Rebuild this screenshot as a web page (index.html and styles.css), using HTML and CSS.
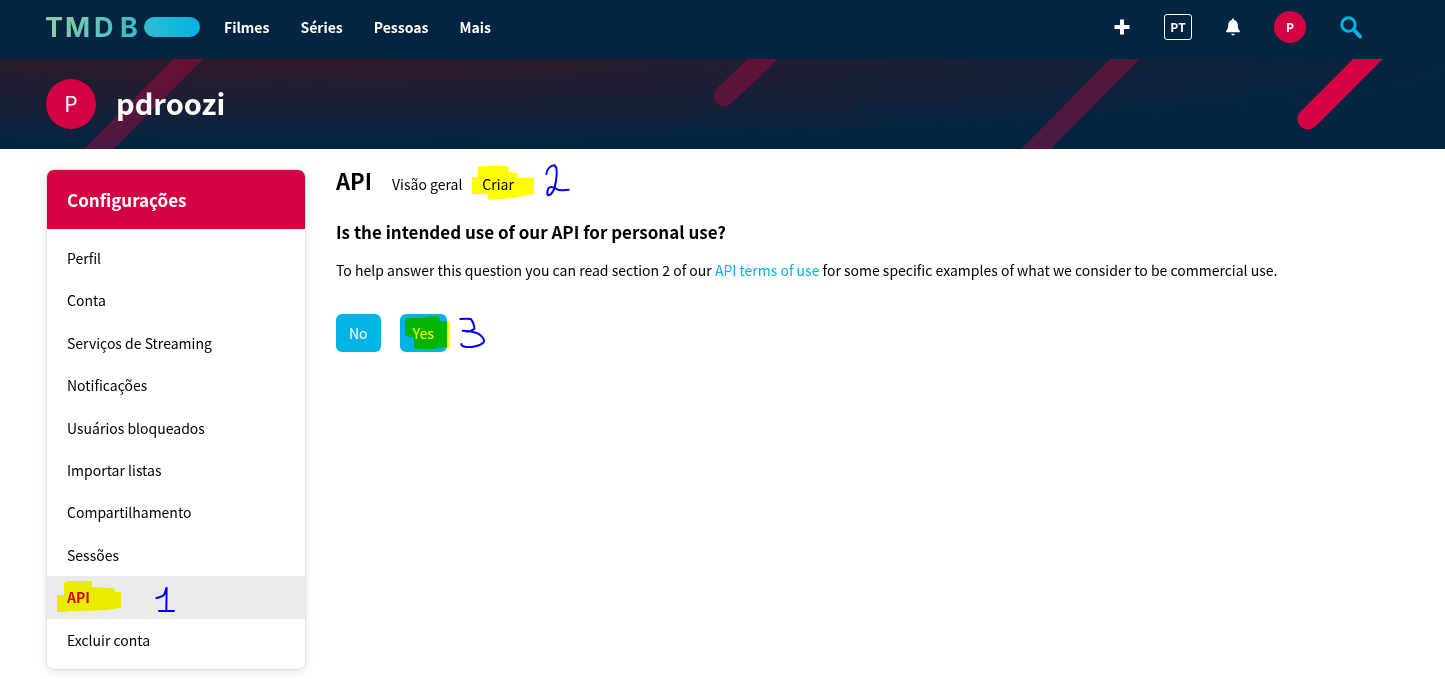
FILE: index.html
```html
<!DOCTYPE html>
<html lang="pt-BR">
<head>
<meta charset="utf-8">
<title>API — TMDB</title>
<link rel="stylesheet" href="styles.css">
</head>
<body>
<header class="topbar">
  <a class="logo" href="#" aria-label="TMDB">
    <svg width="155" height="40" viewBox="0 0 155 40">
      <defs>
        <linearGradient id="brand" gradientUnits="userSpaceOnUse" x1="0" y1="0" x2="155" y2="0">
          <stop offset="0" stop-color="#90cea1"/>
          <stop offset="0.56" stop-color="#3cbec9"/>
          <stop offset="1" stop-color="#00b3e5"/>
        </linearGradient>
      </defs>
      <text class="logo-text" x="-1 19 48 74" y="30" fill="url(#brand)">TMDB</text>
      <rect x="98" y="10" width="56" height="20" rx="10" fill="url(#brand)"/>
    </svg>
  </a>
  <nav class="nav">
    <a href="#">Filmes</a>
    <a href="#">Séries</a>
    <a href="#">Pessoas</a>
    <a href="#">Mais</a>
  </nav>
  <div class="tools">
    <button class="tool" type="button" aria-label="Adicionar">
      <svg width="16" height="16" viewBox="0 0 16 16"><path d="M6 0.500h4V6h5.500v4H10v5.500H6V10H0.500V6H6z" fill="#fff"/></svg>
    </button>
    <button class="lang" type="button">PT</button>
    <button class="tool" type="button" aria-label="Notificações">
      <svg width="14" height="18" viewBox="0 0 14 18"><path d="M7 0.500c.6 0 1 .4 1 1v.4c2.300.5 3.800 2.400 3.800 4.900 0 3.300.6 4.500 1.900 6 .5.600.1 1.500-.7 1.500H1c-.8 0-1.200-.9-.7-1.500 1.300-1.500 1.900-2.700 1.900-6 0-2.500 1.500-4.400 3.800-4.900v-.4c0-.6.4-1 1-1zM5.300 15.700h3.400c0 1-.7 1.700-1.700 1.700s-1.700-.7-1.700-1.700z" fill="#fff"/></svg>
    </button>
    <a class="avatar avatar-small" href="#">P</a>
    <button class="tool" type="button" aria-label="Buscar">
      <svg width="22" height="23" viewBox="0 0 22 23"><g fill="none" stroke="#01b4e4"><circle cx="8.500" cy="8.500" r="6.700" stroke-width="3"/><path d="M14 14l6 6.500" stroke-width="4" stroke-linecap="round"/></g></svg>
    </button>
  </div>
</header>

<section class="banner">
  <svg class="stripes" aria-hidden="true">
    <g fill="none" stroke="#d40242" stroke-width="21" stroke-linecap="round">
      <path d="M218-30L69 120M804-39L724 37M1155-30L1006 120" opacity="0.35"/>
      <path d="M1398-30L1308 60"/>
    </g>
  </svg>
  <a class="avatar avatar-large" href="#">P</a>
  <h1 class="username">pdroozi</h1>
</section>

<div class="page">
  <aside class="card">
    <h2 class="card-title">Configurações</h2>
    <ul class="menu">
      <li><a href="#">Perfil</a></li>
      <li><a href="#">Conta</a></li>
      <li><a href="#">Serviços de Streaming</a></li>
      <li><a href="#">Notificações</a></li>
      <li><a href="#">Usuários bloqueados</a></li>
      <li><a href="#">Importar listas</a></li>
      <li><a href="#">Compartilhamento</a></li>
      <li><a href="#">Sessões</a></li>
      <li class="current">
        <a href="#">API</a>
        <svg class="marker marker-api" width="64" height="31" viewBox="63 63 192 93" aria-hidden="true"><path d="M63 105H84V68L94 63H167V81L215 83L234 85L238 96H255V143L240 146L212 150L165 152L93 153V156H63z"/></svg>
        <svg class="pen pen-one" width="20" height="27" viewBox="357 78 60 81" aria-hidden="true"><path d="M361 114C370 112 380 110 385 103C387 97 390 88 392 82L391 152M369 153H414"/></svg>
      </li>
      <li><a href="#">Excluir conta</a></li>
    </ul>
  </aside>

  <main class="content">
    <div class="tabs">
      <h2 class="title">API</h2>
      <a href="#">Visão geral</a>
      <span class="marked">
        <a href="#">Criar</a>
        <svg class="marker marker-create" width="62" height="34" viewBox="456 33 186 102" aria-hidden="true"><path d="M456 67H474V35L500 33H560L566 38V50L592 54V68H642V117L620 120L590 127L545 132L520 135L504 133V117H456z"/></svg>
        <svg class="pen pen-two" width="27" height="34" viewBox="672 21 81 102" aria-hidden="true"><path d="M679 54C681 38 692 28 704 28C711 33 711 55 708 75C705 95 698 115 686 118C679 117 682 105 685 97C692 89 702 93 712 100C722 106 735 101 746 101"/></svg>
      </span>
    </div>
    <h3 class="question">Is the intended use of our API for personal use?</h3>
    <p class="help">To help answer this question you can read section 2 of our <a href="#">API terms of use</a> for some specific examples of what we consider to be commercial use.</p>
    <div class="actions">
      <button class="btn" type="button">No</button>
      <span class="marked">
        <button class="btn" type="button">Yes</button>
        <svg class="marker marker-yes" width="45" height="33" viewBox="255 198 135 99" aria-hidden="true"><path d="M255 204L300 203L330 199H350L360 204V213H389V293H348V297H295L282 293V262L268 260L255 256z"/></svg>
        <svg class="pen pen-three" width="27" height="31" viewBox="417 202 81 93" aria-hidden="true"><path d="M421 208C432 207 445 207 452 208C458 215 463 225 463 238L452 244C442 246 432 245 426 243C442 243 462 246 475 252C490 262 495 272 490 279C478 290 450 294 435 291C428 290 424 287 424 283"/></svg>
      </span>
    </div>
  </main>
</div>
</body>
</html>
```
FILE: styles.css
```css
* { box-sizing: border-box; }

body {
  margin: 0;
  background: #fff;
  color: #000;
  font-family: "Noto Sans CJK SC", "Noto Sans", sans-serif;
  font-size: 14px;
  line-height: 1.6;
}

h1, h2, h3, p, ul { margin: 0; padding: 0; }
ul { list-style: none; }
a { color: inherit; text-decoration: none; }
svg { display: block; }
button { font-family: inherit; cursor: pointer; }

.topbar {
  display: flex;
  align-items: center;
  padding: 7px 83px 12px 46px;
  background: #032541;
  color: #fff;
}

.logo-text {
  font-family: Inter, sans-serif;
  font-size: 27px;
  font-weight: 700;
}

.nav {
  display: flex;
  gap: 31px;
  margin-left: 23px;
  font-weight: 700;
}

.tools {
  display: flex;
  align-items: center;
  gap: 34px;
  margin-left: auto;
}

.tool {
  padding: 0;
  border: 0;
  background: none;
}

.lang {
  width: 28px;
  height: 26px;
  padding: 0;
  border: 1px solid #fff;
  border-radius: 3px;
  background: none;
  color: #fff;
  font-size: 12px;
  font-weight: 700;
  line-height: 20px;
}

.avatar {
  display: grid;
  place-items: center;
  border-radius: 50%;
  background: #d40242;
  color: #fff;
}

.avatar-small {
  width: 32px;
  height: 32px;
  font-size: 12px;
  font-weight: 700;
}

.avatar-large {
  width: 50px;
  height: 50px;
  font-size: 21px;
}

.banner {
  position: relative;
  display: flex;
  align-items: flex-start;
  gap: 20px;
  padding: 20px 46px;
  background: radial-gradient(1200px 90px at 300px 0, #321829, #032541) #032541;
  color: #fff;
}

.stripes {
  position: absolute;
  inset: 0;
  width: 100%;
  height: 100%;
}

.banner .avatar, .username { position: relative; }

.username {
  font-size: 29px;
  font-weight: 700;
  line-height: 46px;
}

.page {
  display: flex;
  align-items: flex-start;
  gap: 30px;
  padding: 20px 46px 8px;
}

.card {
  flex: 0 0 260px;
  overflow: hidden;
  border: 1px solid #e3e3e3;
  border-radius: 8px;
  box-shadow: 0 2px 8px rgba(0, 0, 0, 0.1);
}

.card-title {
  padding: 16px 20px;
  background: #d40242;
  color: #fff;
  font-size: 17px;
  line-height: 27px;
}

.menu { padding: 8px 0; }

.menu li { position: relative; }

.menu a {
  display: block;
  padding: 10px 20px;
}

.current { background: #ebebeb; }
.current a { color: #d40242; font-weight: 700; }

.content { flex: 1; }

.tabs {
  display: flex;
  align-items: baseline;
  gap: 20px;
  line-height: 22px;
}

.title { font-size: 22px; }

.question {
  margin-top: 24px;
  font-size: 17px;
  line-height: 26px;
}

.help { margin-top: 14px; line-height: 22px; }
.help a { color: #01b4e4; }

.actions {
  display: flex;
  gap: 19px;
  margin-top: 33px;
}

.btn {
  display: block;
  padding: 8px 13px;
  border: 0;
  border-radius: 6px;
  background: #01b4e4;
  color: #fff;
  font-size: 14px;
  line-height: 22px;
}

.marked { position: relative; }

.marker, .pen { position: absolute; }
.marker { fill: #ff0; mix-blend-mode: multiply; pointer-events: none; }
.pen { fill: none; stroke: #00f; stroke-width: 6; stroke-linecap: round; }

.marker-api { left: 10px; top: 5px; }
.pen-one { left: 108px; top: 10px; }
.marker-create { left: -10px; top: -7px; }
.pen-two { left: 62px; top: -10px; }
.marker-yes { left: 5px; top: 2px; }
.pen-three { left: 59px; top: 3px; }
```
